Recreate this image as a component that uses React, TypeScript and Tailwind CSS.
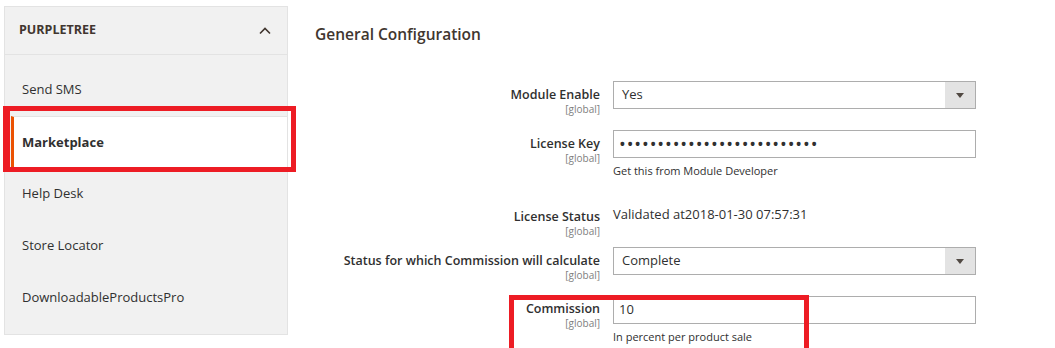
import { ReactNode } from "react";

const menu = ["Send SMS", "Marketplace", "Help Desk", "Store Locator", "DownloadableProductsPro"];

function Label({ title, pt }: { title: string; pt: string }) {
  return (
    <div className={`w-[285px] shrink-0 text-right whitespace-nowrap ${pt}`}>
      <div className="text-[12.5px] leading-[16px] font-semibold text-[#303030]">{title}</div>
      <div className="text-[10px] leading-[12px] text-[#808080]">[global]</div>
    </div>
  );
}

function Row({ title, pt, className, children }: { title: string; pt: string; className: string; children: ReactNode }) {
  return (
    <div className={`flex gap-[13px] ${className}`}>
      <Label title={title} pt={pt} />
      <div className="w-[363px] shrink-0">{children}</div>
    </div>
  );
}

function Select({ value }: { value: string }) {
  return (
    <div className="flex h-[28px] border border-[#adadad] bg-white">
      <div className="flex-1 flex items-center pl-[8px] text-[13px] text-[#303030]">{value}</div>
      <div className="w-[30px] bg-[#e3e3e3] flex items-center justify-center">
        <svg width="8" height="5" viewBox="0 0 8 5">
          <path d="M0 0h8L4 5z" fill="#514943" />
        </svg>
      </div>
    </div>
  );
}

function Input({ children }: { children: ReactNode }) {
  return (
    <div className="flex items-center h-[28px] border border-[#adadad] bg-white pl-[5px] text-[13px] text-[#303030]">
      {children}
    </div>
  );
}

function Note({ text }: { text: string }) {
  return <div className="mt-[6px] text-[11px] leading-[14px] text-[#303030]">{text}</div>;
}

export default function App() {
  return (
    <div className="relative w-[1055px] h-[348px] bg-white overflow-hidden flex" style={{ fontFamily: '"Open Sans", sans-serif' }}>
      <aside className="ml-[4px] mt-[6px] w-[284px] h-[329px] shrink-0 bg-[#f1f1f1] border border-[#e3e3e3]">
        <div className="h-[48px] border-b border-[#e3e3e3] flex items-center justify-between pl-[14px] pr-[16px]">
          <span className="text-[12.5px] font-bold text-[#41362f] uppercase">Purpletree</span>
          <svg width="12" height="8" viewBox="0 0 12 8" fill="none">
            <path d="M1 6.5L6 1.5l5 5" stroke="#41362f" strokeWidth="1.6" />
          </svg>
        </div>
        <ul className="pt-[9px]">
          {menu.map((item) =>
            item === "Marketplace" ? (
              <li key={item} className="h-[52px] ml-[6px] flex items-center pl-[8px] bg-white border-l-[3px] border-[#eb5202] border-t border-t-[#e3e3e3] text-[13px] font-bold text-[#303030]">
                {item}
              </li>
            ) : (
              <li key={item} className="h-[52px] flex items-center pl-[17px] text-[13px] text-[#303030]">
                {item}
              </li>
            )
          )}
        </ul>
      </aside>

      <main className="ml-[27px] pt-[24px]">
        <h2 className="text-[15.5px] leading-[20px] font-semibold text-[#41362f]">General Configuration</h2>

        <Row title="Module Enable" pt="pt-[6px]" className="mt-[37px]">
          <Select value="Yes" />
        </Row>

        <Row title="License Key" pt="pt-[6px]" className="mt-[15px]">
          <Input>
            <span className="text-[18px] leading-none tracking-[0.9px] text-[#303030]">{"•".repeat(26)}</span>
          </Input>
          <Note text="Get this from Module Developer" />
        </Row>

        <Row title="License Status" pt="pt-[5px]" className="mt-[26px]">
          <div className="text-[13px] leading-[20px] text-[#303030]">Validated at2018-01-30 07:57:31</div>
        </Row>

        <Row title="Status for which Commission will calculate" pt="pt-[6px]" className="mt-[10px]">
          <Select value="Complete" />
        </Row>

        <Row title="Commission" pt="pt-[5px]" className="mt-[15px]">
          <Input>10</Input>
          <Note text="In percent per product sale" />
        </Row>
      </main>

      <div className="absolute left-[3px] top-[106px] w-[293px] h-[66px] border-[5px] border-l-[7px] border-[#ed1c24]" />
      <div className="absolute left-[509px] top-[295px] w-[300px] h-[53px] border-[5px] border-b-0 border-[#ed1c24]" />
    </div>
  );
}
